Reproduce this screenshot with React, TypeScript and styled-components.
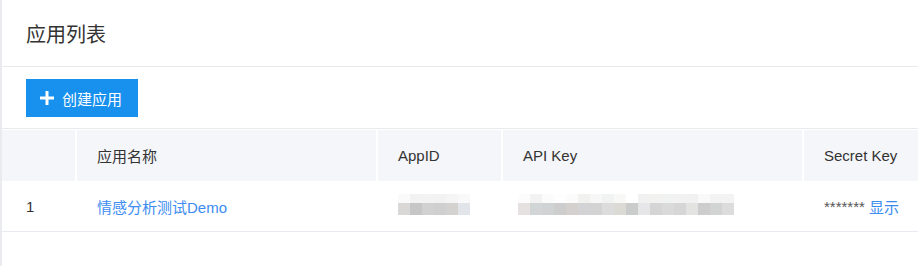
import styled, { createGlobalStyle } from 'styled-components'

const GlobalStyle = createGlobalStyle`
  html, body {
    margin: 0;
    padding: 0;
    background: #ffffff;
  }
  body {
    font-family: "Liberation Sans", Arial, "Noto Sans CJK SC", sans-serif;
    font-size: 15px;
    color: #333333;
  }
`

const apps = [
  {
    id: 1,
    name: '情感分析测试Demo',
    appId: {
      top: ['#fafafa', '#f2f2f2', '#f3f3f3', '#f2f2f2', '#f5f5f5', '#f9f9f9'],
      bottom: ['#d9d8d7', '#c6c6c6', '#d1d1d1', '#cfcfcf', '#d3d2d0', '#e1e4e9'],
    },
    apiKey: {
      top: [
        '#fcfcfc', '#f2f2f2', '#fbfbfb', '#fefefe', '#fbfbfb', '#f1f1ef', '#f6f7f6', '#f1f2f2', '#f8f8f7',
        '#ffffff', '#f1f1f1', '#f2f2f1', '#f1f2f2', '#f2f2f2', '#f1f1f1', '#f9f9f9', '#f2f3f2', '#f3f3f3',
      ],
      bottom: [
        '#e6e1e1', '#d2d5d6', '#cfd3d3', '#cdcdcd', '#d3d0ce', '#d3d3d6', '#d3d3d3', '#dcdcdd', '#dcdad5',
        '#cacccb', '#e6e6e8', '#d5d5d6', '#dadada', '#d6d6d6', '#e3e3e1', '#cdcdcd', '#d2d3d3', '#dcdcdc',
      ],
    },
  },
]

function Redacted({ top, bottom }: { top: string[]; bottom: string[] }) {
  return (
    <Mosaic>
      <MosaicRow $h={9}>
        {top.map((c, i) => (
          <Pixel key={i} $c={c} />
        ))}
      </MosaicRow>
      <MosaicRow $h={12}>
        {bottom.map((c, i) => (
          <Pixel key={i} $c={c} />
        ))}
      </MosaicRow>
    </Mosaic>
  )
}

export default function App() {
  return (
    <Page>
      <GlobalStyle />
      <TitleBar>
        <Title>应用列表</Title>
      </TitleBar>
      <Toolbar>
        <PrimaryButton>
          <svg width='14' height='14' viewBox='0 0 14 14'>
            <path d='M7 0v14M0 7h14' stroke='#ffffff' strokeWidth='3' fill='none' />
          </svg>
          创建应用
        </PrimaryButton>
      </Toolbar>
      <Table>
        <HeadRow>
          <HeadCell />
          <HeadCell>应用名称</HeadCell>
          <HeadCell>AppID</HeadCell>
          <HeadCell>API Key</HeadCell>
          <HeadCell>Secret Key</HeadCell>
        </HeadRow>
        {apps.map(app => (
          <BodyRow key={app.id}>
            <Cell $pad={24}>{app.id}</Cell>
            <Cell>
              <LinkText>{app.name}</LinkText>
            </Cell>
            <Cell>
              <Redacted {...app.appId} />
            </Cell>
            <Cell $pad={15}>
              <Redacted {...app.apiKey} />
            </Cell>
            <Cell>
              <Masked>*******</Masked>
              <LinkText>显示</LinkText>
            </Cell>
          </BodyRow>
        ))}
      </Table>
    </Page>
  )
}

const Page = styled.div`
  width: 918px;
  height: 266px;
  box-sizing: border-box;
  border-left: 2px solid #e9ebef;
  background: #ffffff;
`

const TitleBar = styled.div`
  height: 66px;
  display: flex;
  align-items: center;
  padding-left: 24px;
  border-bottom: 1px solid #e8eaec;
`

const Title = styled.h1`
  margin: 0;
  font-family: "Noto Sans CJK SC", sans-serif;
  font-size: 20px;
  font-weight: 400;
  color: #333333;
`

const Toolbar = styled.div`
  padding: 12px 24px 11px;
  border-bottom: 1px solid #e8eaec;
`

const PrimaryButton = styled.button`
  height: 38px;
  display: flex;
  align-items: center;
  gap: 8px;
  padding: 0 16px 0 14px;
  border: none;
  border-radius: 0;
  background: #1790ee;
  color: #ffffff;
  font-family: "Noto Sans CJK SC", sans-serif;
  font-size: 15px;
  cursor: pointer;
`

const Table = styled.div`
  margin-top: 1px;
`

const HeadRow = styled.div`
  display: grid;
  grid-template-columns: 73px 299px 123px 299px 1fr;
  column-gap: 2px;
  height: 51px;
`

const HeadCell = styled.div`
  display: flex;
  align-items: center;
  padding-left: 20px;
  background: #f5f6fa;
  color: #333333;
  white-space: nowrap;
`

const BodyRow = styled.div`
  display: grid;
  grid-template-columns: 73px 299px 123px 299px 1fr;
  column-gap: 2px;
  height: 50px;
  border-bottom: 1px solid #e8eaf2;
`

const Cell = styled.div<{ $pad?: number }>`
  display: flex;
  align-items: center;
  padding-left: ${p => p.$pad ?? 20}px;
  color: #333333;
  white-space: nowrap;
`

const LinkText = styled.span`
  color: #3d8cf2;
  cursor: pointer;
`

const Masked = styled.span`
  color: #555555;
  margin-right: 4px;
`

const Mosaic = styled.div`
  display: flex;
  flex-direction: column;
  margin-top: -4px;
`

const MosaicRow = styled.div<{ $h: number }>`
  display: flex;
  height: ${p => p.$h}px;
`

const Pixel = styled.span<{ $c: string }>`
  width: 12px;
  height: 100%;
  background: ${p => p.$c};
`
